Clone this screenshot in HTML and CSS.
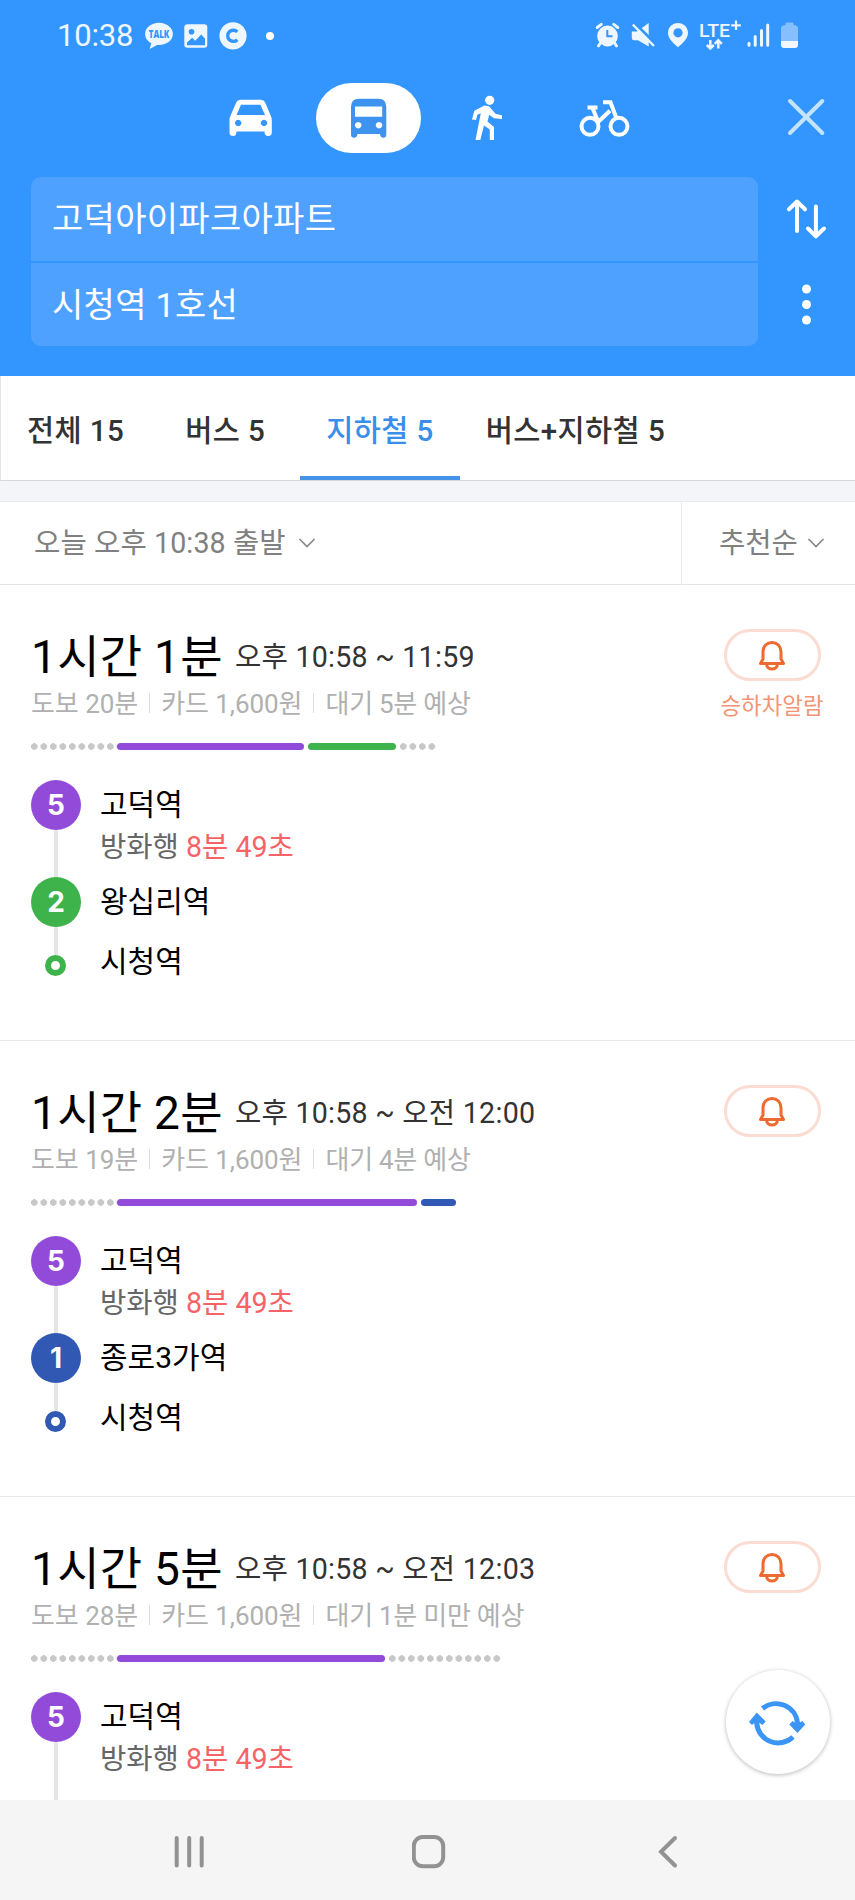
FILE: index.html
```html
<!DOCTYPE html>
<html lang="ko">
<head>
<meta charset="utf-8">
<title>길찾기</title>
<link rel="stylesheet" href="styles.css">
</head>
<body>
<svg class="defs" width="0" height="0">
  <symbol id="bell" viewBox="0 0 28 32">
    <path d="M2.500 24.500 L5 20 V12.400 a9 9 0 0 1 18 0 V20 L25.500 24.500 Z" fill="none" stroke="#ee6a30" stroke-width="3" stroke-linejoin="round"/>
    <path d="M8.600 25 a5.400 5 0 0 0 10.800 0" fill="none" stroke="#ee6a30" stroke-width="3"/>
  </symbol>
  <symbol id="chevron" viewBox="0 0 18 12">
    <path d="M1.500 2 L9 9.600 L16.500 2" fill="none" stroke="#888" stroke-width="1.700"/>
  </symbol>
</svg>
<div class="screen">
  <header class="header">
    <div class="status">
      <span class="clock">10:38</span>
      <svg class="talk" viewBox="145 20 28 32" width="28" height="32">
        <path d="M159 22.800c-7.700 0-13.900 5-13.900 11.200 0 4 2.500 7.300 6.200 9.300l-1.600 5.700 7.400-4.100c9 .8 15.800-4.400 15.800-10.900 0-6.200-6.200-11.200-13.900-11.200z" fill="#eef6ff"/>
        <text x="148.800" y="37.800" textLength="20.500" lengthAdjust="spacingAndGlyphs" class="talk-text">TALK</text>
      </svg>
      <svg class="photo" viewBox="184 20 24 32" width="24" height="32">
        <rect x="184.300" y="24.300" width="23" height="23.500" rx="3" fill="#eef6ff"/>
        <circle cx="191.500" cy="31.800" r="2.800" fill="#3396ff"/>
        <path d="M187 42.500 L192.200 37.800 L195.200 40.800 L201.200 34.500 L205 38.500 V45.200 H187 Z" fill="#3396ff"/>
      </svg>
      <svg class="coin" viewBox="219 20 28 32" width="28" height="32">
        <circle cx="233" cy="35.800" r="13.600" fill="#eef6ff"/>
        <path d="M237.300 31.900 a5.600 5.600 0 1 0 0 7.800" fill="none" stroke="#3396ff" stroke-width="3.400"/>
      </svg>
      <span class="more-dot"></span>
      <div class="system">
        <svg viewBox="595 20 25 32" width="25" height="32">
          <circle cx="607.500" cy="36" r="10.400" fill="#eef6ff"/>
          <path d="M597.200 27.500 L601.300 24.400 M617.800 27.500 L613.700 24.400 M600.500 43 L598.500 45.800 M614.500 43 L616.500 45.800" stroke="#eef6ff" stroke-width="3" stroke-linecap="round"/>
          <path d="M607.300 30 V36.200 H612.500" fill="none" stroke="#3396ff" stroke-width="2"/>
        </svg>
        <svg class="mute" viewBox="631 20 25 32" width="25" height="32">
          <path d="M631.800 31.500 H637 L648.700 23 V46.500 L638 40.300 H633.500 Q631.800 40 631.800 38 Z" fill="#eef6ff"/>
          <path d="M634 22.500 L656 44.300" stroke="#3396ff" stroke-width="3"/>
          <path d="M632.800 24.500 L654 46" stroke="#eef6ff" stroke-width="2.400"/>
        </svg>
        <svg class="pin" viewBox="668 20 20 32" width="20" height="32">
          <path fill-rule="evenodd" d="M678 23 c-5.600 0-10 4.300-10 9.700 0 6 5.500 10.500 10 14.500 4.500-4 10-8.500 10-14.500 0-5.400-4.400-9.700-10-9.700z m0 5.200 a4.600 4.600 0 1 1 0 9.200 a4.600 4.600 0 1 1 0-9.200z" fill="#eef6ff"/>
        </svg>
        <svg class="lte" viewBox="698 14 43 38" width="43" height="38">
          <text x="699" y="37" class="lte-text" textLength="31" lengthAdjust="spacingAndGlyphs">LTE</text>
          <path d="M736 20.500 V30 M731.200 25.300 H740.800" stroke="#eef6ff" stroke-width="2.200"/>
          <path d="M710.300 40 V47.500 M706.800 45 L710.300 48.500 L713.800 45 M718.300 48.500 V41.500 M714.800 43.800 L718.300 40.300 L721.800 43.800" fill="none" stroke="#eef6ff" stroke-width="2.500"/>
        </svg>
        <svg class="signal" viewBox="747 20 23 32" width="23" height="32">
          <path d="M749 43.200 V45.300 M755.200 36.500 V45.300 M761.500 30.500 V45.300 M767.700 25 V45.300" stroke="#eef6ff" stroke-width="3" stroke-linecap="round"/>
        </svg>
        <svg class="battery" viewBox="781 20 18 32" width="18" height="32">
          <path d="M785.500 25 V23.600 Q785.500 22.600 786.500 22.600 H792.500 Q793.500 22.600 793.500 23.600 V25 L796 25.500 Q798 26 798 28 V41 H781 V28 Q781 26 783 25.500 Z" fill="#85bfff"/>
          <path d="M781 41 H798 V45 Q798 48 795 48 H784 Q781 48 781 45 Z" fill="#f2f8ff"/>
        </svg>
      </div>
    </div>

    <nav class="modes">
      <span class="mode"><svg viewBox="229 99 44 38" width="44" height="38">
        <path fill-rule="evenodd" d="M240.500 99.800 H261 Q264 99.800 265.200 102.500 L270.600 115.500 Q271.800 117.500 271.800 120 V132.500 Q271.800 136 268 136 Q264.500 136 264.500 131.500 H236.500 Q236.500 136 233.200 136 Q229.500 136 229.500 132.500 V120 Q229.500 117.500 230.600 115.500 L236.200 102.500 Q237.500 99.800 240.500 99.800 Z M241 104.800 L236.500 115 H265 L260.500 104.800 Z M238.200 119.800 a3.200 3.200 0 1 0 .01 0 Z M264 119.800 a3.200 3.200 0 1 0 .01 0 Z" fill="#fff"/>
      </svg></span>
      <span class="mode active"><svg viewBox="350 98 38 41" width="38" height="41">
        <path fill-rule="evenodd" d="M359 98.800 H378 Q386.300 98.800 386.300 107 V134.500 Q386.300 137.800 383.200 137.800 Q380.500 137.800 380 134 H357.500 Q357 137.800 354.200 137.800 Q351 137.800 351 134.500 V107 Q351 98.800 359 98.800 Z M355 106.400 V116.800 H382.200 V106.400 Z M358.200 121.900 a3.300 3.300 0 1 0 .01 0 Z M379 121.900 a3.300 3.300 0 1 0 .01 0 Z" fill="#3d93ee"/>
      </svg></span>
      <span class="mode"><svg viewBox="471 95 32 46" width="32" height="46">
        <circle cx="489.700" cy="100.300" r="4.600" fill="#fff"/>
        <path d="M484.500 105.600 L489 106.200 L495.500 113.800 L502 115.200 V119 L494 118.300 L489.200 114.800 L487.500 121.500 L494 127 V140 H489.800 V129.500 L484 125.500 L480.300 140 H475.500 L480.800 113.200 L477.300 114.800 L476 120 L472 119.500 L474.300 110.800 Z" fill="#fff"/>
      </svg></span>
      <span class="mode"><svg viewBox="579 99 52 39" width="52" height="39">
        <g fill="none" stroke="#fff" stroke-width="4">
          <circle cx="590" cy="126.300" r="8.500"/><circle cx="619" cy="126.300" r="8.500"/>
          <path d="M587.500 107.500 H597.500 M592.500 108 L598.500 122.500 M597 123 L610 110.800 M603 102.300 H610.500 L616.500 118.500"/>
        </g>
      </svg></span>
      <svg class="close" viewBox="786 98 40 40" width="40" height="40">
        <path d="M790 101 L822.300 133 M822.300 101 L790 133" stroke="#c4e3ff" stroke-width="4" stroke-linecap="round"/>
      </svg>
    </nav>

    <div class="route">
      <div class="fields">
        <div class="field">고덕아이파크아파트</div>
        <div class="field">시청역 1호선</div>
      </div>
      <div class="tools">
        <svg viewBox="786 198 42 42" width="42" height="42">
          <path d="M797 231 V202 M789 209.300 L797 201.500 L805 209.300 M815.900 206.500 V236 M808 228.500 L815.900 236.300 L824 228.500" fill="none" stroke="#fff" stroke-width="4" stroke-linecap="round" stroke-linejoin="round"/>
        </svg>
        <svg viewBox="796 284 20 41" width="20" height="41">
          <g fill="#fff"><circle cx="805.500" cy="289" r="4.500"/><circle cx="805.500" cy="304.500" r="4.500"/><circle cx="805.500" cy="320" r="4.500"/></g>
        </svg>
      </div>
    </div>
  </header>

  <nav class="tabs">
    <span class="tab wide">전체 15</span>
    <span class="tab wide">버스 5</span>
    <span class="tab selected">지하철 5</span>
    <span class="tab">버스+지하철 5</span>
  </nav>

  <div class="filter">
    <span class="depart">오늘 오후 10:38 출발<svg width="18" height="12"><use href="#chevron"/></svg></span>
    <span class="sort">추천순<svg width="18" height="12"><use href="#chevron"/></svg></span>
  </div>

  <main class="results">
    <article class="card">
      <div class="info">
        <div class="summary"><span class="duration">1시간 1분</span><span class="times">오후 10:58 ~ 11:59</span></div>
        <div class="meta"><span>도보 20분</span><span>카드 1,600원</span><span>대기 5분 예상</span></div>
        <div class="bar"><i class="walk" style="width:86px"></i><i class="seg line5" style="width:187px"></i><i class="seg line2" style="width:88px"></i><i class="walk" style="width:38px"></i></div>
        <div class="steps">
          <div class="step first"><div class="rail"><b class="badge line5">5</b><i class="line"></i></div><div><p class="name">고덕역</p><p class="bound">방화행 <em>8분 49초</em></p></div></div>
          <div class="step second"><div class="rail"><b class="badge line2">2</b><i class="line"></i></div><p class="name">왕십리역</p></div>
          <div class="step"><div class="rail"><i class="line short"></i><i class="end end2"></i></div><p class="name">시청역</p></div>
        </div>
      </div>
      <div class="alarm"><span class="alarm-btn"><svg width="28" height="32"><use href="#bell"/></svg></span><span class="alarm-label">승하차알람</span></div>
    </article>

    <article class="card">
      <div class="info">
        <div class="summary"><span class="duration">1시간 2분</span><span class="times">오후 10:58 ~ 오전 12:00</span></div>
        <div class="meta"><span>도보 19분</span><span>카드 1,600원</span><span>대기 4분 예상</span></div>
        <div class="bar"><i class="walk" style="width:86px"></i><i class="seg line5" style="width:300px"></i><i class="seg line1" style="width:35px"></i></div>
        <div class="steps">
          <div class="step first"><div class="rail"><b class="badge line5">5</b><i class="line"></i></div><div><p class="name">고덕역</p><p class="bound">방화행 <em>8분 49초</em></p></div></div>
          <div class="step second"><div class="rail"><b class="badge line1">1</b><i class="line"></i></div><p class="name">종로3가역</p></div>
          <div class="step"><div class="rail"><i class="line short"></i><i class="end end1"></i></div><p class="name">시청역</p></div>
        </div>
      </div>
      <div class="alarm"><span class="alarm-btn"><svg width="28" height="32"><use href="#bell"/></svg></span></div>
    </article>

    <article class="card">
      <div class="info">
        <div class="summary"><span class="duration">1시간 5분</span><span class="times">오후 10:58 ~ 오전 12:03</span></div>
        <div class="meta"><span>도보 28분</span><span>카드 1,600원</span><span>대기 1분 미만 예상</span></div>
        <div class="bar"><i class="walk" style="width:86px"></i><i class="seg line5" style="width:268px"></i><i class="walk" style="width:114px"></i></div>
        <div class="steps">
          <div class="step last"><div class="rail"><b class="badge line5">5</b><i class="line"></i></div><div><p class="name">고덕역</p><p class="bound">방화행 <em>8분 49초</em></p></div></div>
        </div>
      </div>
      <div class="alarm"><span class="alarm-btn"><svg width="28" height="32"><use href="#bell"/></svg></span></div>
    </article>
  </main>

  <div class="refresh">
    <svg viewBox="748 1696 60 54" width="60" height="54">
      <g fill="none" stroke="#3a95f5" stroke-width="5">
        <path d="M762.500 1709.500 A21.500 21.500 0 0 1 797.500 1724 V1727"/>
        <path d="M793 1738 A21.500 21.500 0 0 1 756.700 1724 V1720"/>
      </g>
      <path d="M756.700 1713.500 L765.700 1722.500 L762.500 1726 L756.700 1722 L752 1726 L749 1723 Z M797.500 1734 L789.300 1725.500 L792.500 1722 L797.500 1725 L802.300 1722 L805.200 1725.500 Z" fill="#3a95f5"/>
    </svg>
  </div>

  <footer class="navbar">
    <svg viewBox="172 1834 34 36" width="34" height="36"><path d="M176.700 1838 V1865.500 M189.200 1838 V1865.500 M201.700 1838 V1865.500" stroke="#929292" stroke-width="4" stroke-linecap="round"/></svg>
    <svg viewBox="412 1833 38 38" width="38" height="38"><rect x="413.800" y="1837" width="29.400" height="29.200" rx="9" fill="none" stroke="#929292" stroke-width="4"/></svg>
    <svg viewBox="656 1834 22 36" width="22" height="36"><path d="M675 1838 L661 1851.700 L675 1865.500" fill="none" stroke="#929292" stroke-width="4" stroke-linecap="round"/></svg>
  </footer>
</div>
</body>
</html>
```
FILE: styles.css
```css
* { box-sizing: border-box; margin: 0; padding: 0; }
body { font-family: Roboto, "Noto Sans CJK KR", sans-serif; background: #fff; color: #000; white-space: nowrap; }
svg { display: block; flex: none; }
i, em { font-style: normal; }
.defs { position: absolute; }
.screen { position: relative; width: 855px; height: 1900px; overflow: hidden; display: flex; flex-direction: column; }

/* Header */
.header { flex: none; height: 376px; background: #3396ff; }
.status { display: flex; align-items: center; height: 83px; padding: 0 56px 11px 57px; color: #eef6ff; }
.clock { width: 88px; font-size: 31px; line-height: 42px; letter-spacing: -.2px; }
.photo { margin-left: 11px; }
.coin { margin-left: 11px; }
.talk-text { font: 800 10.500px "Open Sans", sans-serif; fill: #3396ff; }
.more-dot { width: 8px; height: 8px; margin-left: 19px; border-radius: 50%; background: #fff; }
.system { display: flex; align-items: flex-end; margin-left: auto; }
.mute { margin-left: 11px; }
.pin { margin-left: 12px; }
.lte { margin: -6px 0 0 10px; }
.lte-text { font: 500 18.500px Roboto, sans-serif; fill: #eef6ff; }
.signal { margin-left: 6px; }
.battery { margin-left: 11px; }

.modes { display: flex; align-items: center; height: 94px; padding: 0 29px 24px 198px; gap: 13px; }
.mode { display: flex; align-items: center; justify-content: center; width: 105px; height: 70px; border-radius: 35px; }
.mode.active { background: #fff; }
.close { margin-left: auto; }

.route { display: flex; height: 169px; padding-left: 31px; }
.fields { display: flex; flex-direction: column; gap: 2px; width: 727px; border-radius: 10px; overflow: hidden; }
.field { flex: none; height: 83.500px; padding-left: 21px; background: #4fa1ff; color: #fff; font-size: 34px; line-height: 85px; letter-spacing: .3px; }
.tools { display: flex; flex-direction: column; align-items: center; width: 97px; padding-top: 21px; gap: 44px; }

/* Tabs */
.tabs { flex: none; display: flex; height: 105px; border-left: 1px solid #e3e5e8; border-bottom: 1px solid #d5d7da; }
.tab { height: 104px; padding: 0 26px; font-size: 29.500px; font-weight: 500; line-height: 110px; letter-spacing: .4px; color: #333; }
.tab.wide { margin-right: 9px; }
.tab.selected { color: #3a8eea; border-bottom: 4px solid #4493e8; }

/* Filter row */
.filter { flex: none; display: flex; height: 104px; border-top: 20px solid #f3f5f8; color: #808080; font-size: 28.600px; line-height: 36px; box-shadow: inset 0 1px 0 #e9ebed, inset 0 -1px 0 #e3e3e3; }
.depart, .sort { display: flex; align-items: center; }
.depart { width: 681px; padding-left: 34px; gap: 12px; letter-spacing: .1px; }
.sort { padding-left: 37px; gap: 9px; border-left: 1px solid #ececec; }

/* Results */
.results { flex: 1; min-height: 0; overflow: hidden; }
.card { display: flex; justify-content: space-between; height: 456px; padding: 42px 32px 0 31px; border-bottom: 1px solid #e9e9e9; }
.summary { display: flex; align-items: center; height: 60px; gap: 12px; }
.duration { font-size: 46px; line-height: 60px; letter-spacing: .3px; }
.times { font-size: 28.600px; line-height: 60px; letter-spacing: .26px; color: #333; }
.meta { display: flex; align-items: center; height: 34px; font-size: 26px; line-height: 35px; color: #b0b0b0; }
.meta span { letter-spacing: -.05px; }
.meta span + span { position: relative; margin-left: 11px; padding-left: 12px; }
.meta span:last-child { letter-spacing: -.25px; }
.meta span + span::before { content: ""; position: absolute; left: 0; top: 6px; width: 1px; height: 20px; background: #dcdcdc; }
.bar { display: flex; height: 7px; margin-top: 22px; }
.walk { background: radial-gradient(circle at 3.300px 3.500px, #c8c8c8 3px, transparent 3.600px) 0 0 / 9.500px 7px repeat-x; }
.seg { height: 7px; margin-right: 4px; border-radius: 3.500px; }
.line5 { background: #924bd9; }
.line2 { background: #3eb34b; }
.line1 { background: #3158b3; }

.steps { margin-top: 30px; }
.step { display: flex; gap: 19px; }
.step.first { height: 97px; }
.step.second { height: 60px; }
.step.last { height: 200px; }
.rail { display: flex; flex-direction: column; align-items: center; width: 50px; }
.badge { flex: none; width: 50px; height: 50px; border-radius: 50%; color: #fff; font: 700 28px/51px Inter, sans-serif; text-align: center; }
.line { flex: 1; width: 4px; background: #e5e5e5; }
.line.short { flex: none; height: 18px; }
.end { width: 21px; height: 21px; margin-right: 1px; border-radius: 50%; border: 6.500px solid; }
.end2 { border-color: #3eb34b; }
.end1 { border-color: #3158b3; }
.name { height: 49px; font-size: 30px; line-height: 50px; }
.bound { height: 34px; font-size: 28.600px; line-height: 36px; color: #666; }
.bound em { color: #f56464; }

.alarm { display: flex; flex-direction: column; align-items: center; width: 102px; padding-top: 2px; }
.alarm-btn { display: flex; align-items: center; justify-content: center; width: 97px; height: 52px; border: 3px solid #fbdcd2; border-radius: 26px; }
.alarm-label { margin-top: 9px; font-size: 22.400px; line-height: 32px; color: #f29574; }

/* Floating refresh button and system navigation */
.refresh { position: absolute; left: 726px; top: 1670px; display: flex; align-items: center; justify-content: center; width: 104px; height: 104px; border-radius: 50%; background: #fff; box-shadow: 0 1px 4px rgba(0, 0, 0, .28); }
.navbar { flex: none; display: flex; align-items: center; justify-content: space-between; height: 100px; padding: 3px 177px 0 172px; background: #f5f5f5; }
```
